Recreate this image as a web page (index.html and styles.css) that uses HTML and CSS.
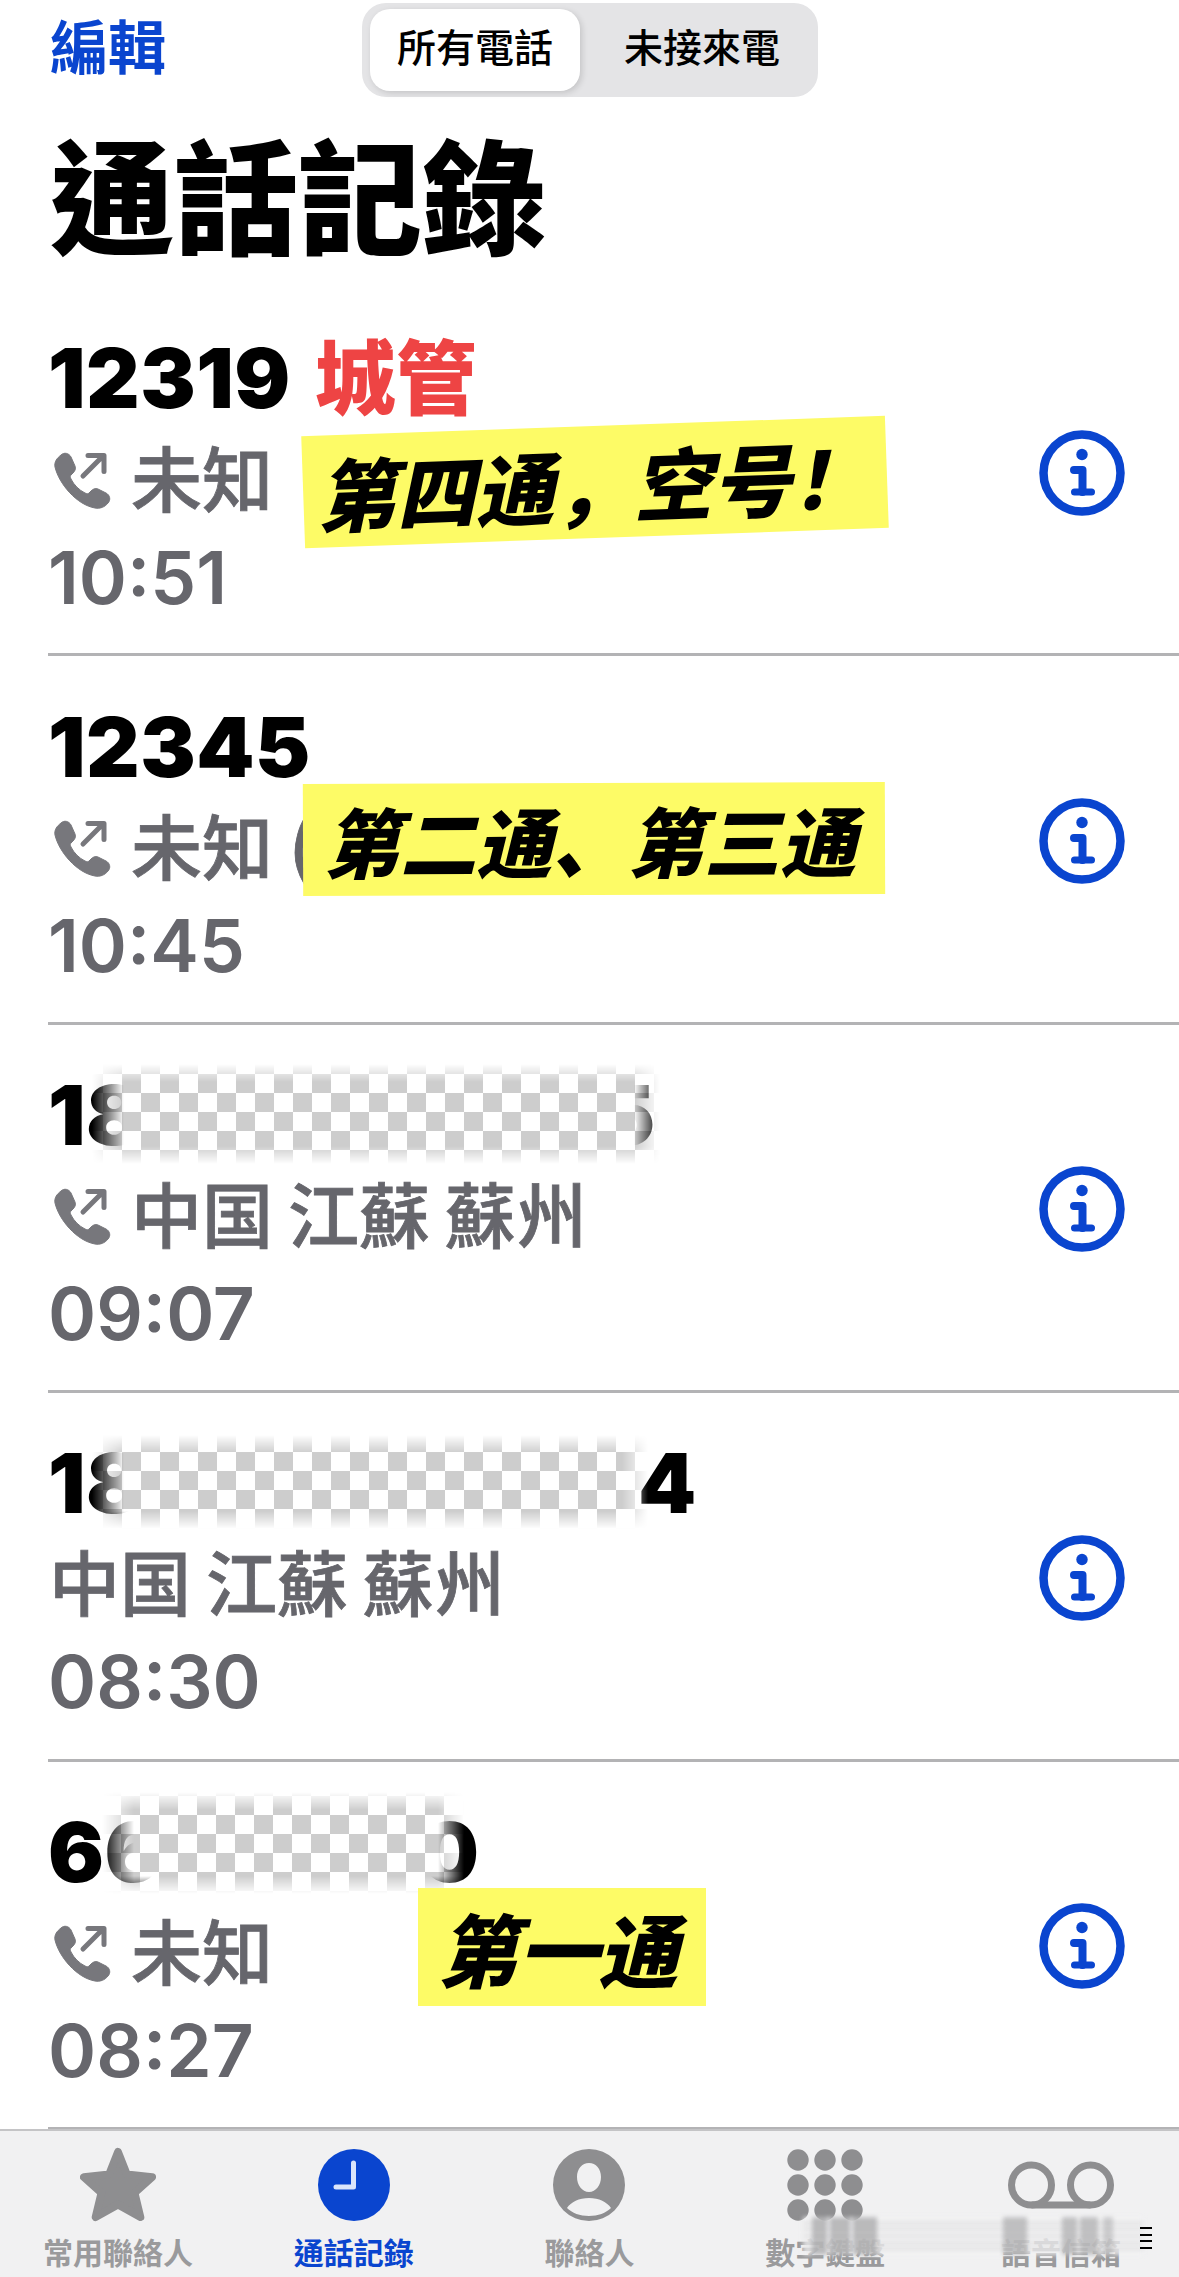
FILE: index.html
```html
<!DOCTYPE html>
<html lang="zh-Hant">
   <head>
      <meta charset="UTF-8">
      <title>通話記錄</title>
      <link rel="stylesheet" href="styles.css">
   </head>
   <body>
      <svg class="defs" width="0" height="0">
         <symbol id="call-out" viewBox="0 0 60 60">
            <path d="M9 5c3-3 8-2 10 2l4 9c1 3 0 5-2 7l-2 2c-1 1-1 2 0 4 3 6 8 11 14 14 2 1 3 1 4 0l2-2c2-2 4-3 7-2l8 4c4 2 5 7 2 10-3 4-8 6-13 5C25 55 7 34 3 17 2 12 5 8 9 5z"/>
            <path d="M31 26L50 7M36 5.500h16v16" fill="none" stroke-width="5" stroke-linecap="round" stroke-linejoin="round"/>
         </symbol>
         <symbol id="info" viewBox="0 0 86 86">
            <circle cx="43" cy="43" r="38.500" fill="none" stroke="#0a45cf" stroke-width="8.500"/>
            <circle cx="43" cy="24.500" r="5.700" fill="#0a45cf"/>
            <path d="M35 40h8.500v22" fill="none" stroke="#0a45cf" stroke-width="8" stroke-linecap="round" stroke-linejoin="round"/>
            <path d="M35.500 62h17" fill="none" stroke="#0a45cf" stroke-width="7" stroke-linecap="round"/>
         </symbol>
      </svg>

      <div class="screen">
         <header class="top">
            <a class="edit">編輯</a>
            <div class="segment">
               <span class="seg-item seg-on">所有電話</span>
               <span class="seg-item">未接來電</span>
            </div>
         </header>
         <h1 class="title">通話記錄</h1>

         <ul class="calls">
            <li class="call">
               <div class="call-text">
                  <div class="name">12319<span class="tag">城管</span></div>
                  <div class="sub"><svg class="out"><use href="#call-out"/></svg>未知</div>
                  <div class="time">10:51</div>
               </div>
               <svg class="info"><use href="#info"/></svg>
               <div class="note note-a" lang="zh-CN"><span>第四通&#xFF0C;空号&#xFF01;</span></div>
            </li>
            <li class="call">
               <div class="call-text">
                  <div class="name">12345</div>
                  <div class="sub"><svg class="out"><use href="#call-out"/></svg>未知 (</div>
                  <div class="time">10:45</div>
               </div>
               <svg class="info"><use href="#info"/></svg>
               <div class="note note-b" lang="zh-CN"><span>第二通、第三通</span></div>
            </li>
            <li class="call">
               <div class="call-text">
                  <div class="name">18<span class="tail tail-c">5</span></div>
                  <div class="sub"><svg class="out"><use href="#call-out"/></svg>中国 江蘇 蘇州</div>
                  <div class="time">09:07</div>
               </div>
               <svg class="info"><use href="#info"/></svg>
               <div class="mosaic mosaic-c"></div>
            </li>
            <li class="call">
               <div class="call-text">
                  <div class="name">18<span class="tail tail-d">4</span></div>
                  <div class="sub">中国 江蘇 蘇州</div>
                  <div class="time">08:30</div>
               </div>
               <svg class="info"><use href="#info"/></svg>
               <div class="mosaic mosaic-d"></div>
            </li>
            <li class="call">
               <div class="call-text">
                  <div class="name">66<span class="tail tail-e">0</span></div>
                  <div class="sub"><svg class="out"><use href="#call-out"/></svg>未知</div>
                  <div class="time">08:27</div>
               </div>
               <svg class="info"><use href="#info"/></svg>
               <div class="mosaic mosaic-e"></div>
               <div class="note note-c" lang="zh-CN"><span>第一通</span></div>
            </li>
         </ul>

         <nav class="tabs">
            <div class="tab">
               <svg class="tab-icon" viewBox="0 0 78 76"><polygon class="star" points="39,4 48,27 74,30 56,46 62,71 39,58 16,71 22,46 4,30 30,27"/></svg>
               <span>常用聯絡人</span>
            </div>
            <div class="tab tab-on">
               <svg class="tab-icon" viewBox="-2 -2 76 76"><circle cx="36" cy="36" r="36"/><path d="M35.500 14v24H18" fill="none" stroke="#dbe5fb" stroke-width="5" stroke-linecap="round" stroke-linejoin="round"/></svg>
               <span>通話記錄</span>
            </div>
            <div class="tab">
               <svg class="tab-icon" viewBox="-2 -2 76 76"><path fill-rule="evenodd" d="M36 0a36 36 0 1 1 0 72a36 36 0 0 1 0-72zM36 14c-7 0-12 6-12 14s5 15 12 15 12-7 12-15-5-14-12-14zM36 49c-10 0-18 4-22 10 5 5 13 8 22 8s17-3 22-8c-4-6-12-10-22-10z"/></svg>
               <span>聯絡人</span>
            </div>
            <div class="tab">
               <svg class="tab-icon" viewBox="0 0 76 76">
                  <circle cx="11" cy="13" r="10.700"/><circle cx="38" cy="13" r="10.700"/><circle cx="65" cy="13" r="10.700"/>
                  <circle cx="11" cy="38" r="10.700"/><circle cx="38" cy="38" r="10.700"/><circle cx="65" cy="38" r="10.700"/>
                  <circle cx="11" cy="63" r="10.700"/><circle cx="38" cy="63" r="10.700"/><circle cx="65" cy="63" r="10.700"/>
               </svg>
               <span>數字鍵盤</span>
            </div>
            <div class="tab">
               <svg class="tab-icon tab-icon-wide" viewBox="0 0 106 76">
                  <g class="tape"><circle cx="23.500" cy="38" r="20"/><circle cx="82.500" cy="38" r="20"/><path d="M23.500 58h59"/></g>
               </svg>
               <span>語音信箱</span>
            </div>
            <div class="smear"></div>
            <div class="ticks"></div>
         </nav>
      </div>
   </body>
</html>
```

FILE: styles.css
```css
* {
    box-sizing: border-box;
}
html,
body {
    margin: 0;
    padding: 0;
    background: #fff;
}
.defs {
    position: absolute;
}
.screen {
    width: 1179px;
    height: 2277px;
    overflow: hidden;
    position: relative;
    font-family: "Inter", "Noto Sans CJK TC", sans-serif;
    color: #000;
}

/* Top bar */
.top {
    height: 97px;
    padding: 3px 0 0 50px;
    display: flex;
    align-items: flex-start;
}
.edit {
    width: 312px;
    padding-top: 5px;
    font-size: 58px;
    line-height: 80px;
    font-weight: 700;
    color: #0a45cf;
}
.segment {
    width: 456px;
    height: 94px;
    padding: 6px 8px;
    display: flex;
    background: #e4e4e6;
    border-radius: 24px;
}
.seg-item {
    width: 220px;
    font-size: 39px;
    line-height: 78px;
    font-weight: 500;
    text-align: center;
    margin-left: 14px;
}
.seg-on {
    width: 214px;
    margin-left: 0;
    background: #fff;
    border-radius: 20px;
    box-shadow: 2px 2px 6px rgba(0, 0, 0, 0.14);
}

.title {
    margin: 33px 0 0 50px;
    height: 158px;
    font-size: 124px;
    line-height: 140px;
    font-weight: 900;
}

/* Call rows */
.calls {
    list-style: none;
    margin: 0;
    padding: 0 0 0 48px;
}
.call {
    position: relative;
    height: 368.4px;
    padding: 0 54px 0 2px;
    display: flex;
    align-items: center;
    justify-content: space-between;
    border-bottom: 3px solid #b3b3b5;
}
.call-text {
    margin-top: 10px;
}
.name {
    position: relative;
    margin-left: -2px;
    font-size: 83px;
    line-height: 102px;
    font-weight: 900;
    letter-spacing: 0.5px;
}
.tag {
    margin-left: 24px;
    color: #ee4444;
    font-size: 81px;
    font-weight: 900;
    letter-spacing: 0;
}
.sub {
    display: flex;
    align-items: center;
    margin-left: -1px;
    font-size: 71px;
    line-height: 100px;
    font-weight: 500;
    word-spacing: -4px;
    color: #66666c;
    -webkit-text-stroke: 0.8px #66666c;
}
.out {
    width: 60px;
    height: 60px;
    margin: 0 19px 0 3px;
    fill: #77777c;
    stroke: #77777c;
}
.time {
    margin-left: -2px;
    font-size: 73px;
    line-height: 95px;
    font-weight: 600;
    color: #66666c;
}
.info {
    width: 86px;
    height: 86px;
    margin-top: 4px;
}
.tail {
    position: absolute;
    top: 11px;
    line-height: 80px;
}
.tail-c {
    left: 552px;
}
.tail-d {
    left: 590px;
}
.tail-e {
    left: 372px;
}

/* Stickers added on top of the screenshot */
.note {
    position: absolute;
    background: #fdfb66;
    display: flex;
    align-items: center;
    justify-content: center;
    font-family: "Noto Sans CJK SC", sans-serif;
    font-size: 74px;
    line-height: 1;
    font-style: italic;
    font-weight: 900;
    white-space: nowrap;
}
.note-a {
    left: 255px;
    top: 138px;
    width: 584px;
    height: 112px;
    font-size: 79px;
    padding-right: 4px;
    transform: rotate(-2deg);
}
.note-b {
    left: 255px;
    top: 127px;
    width: 582px;
    height: 112px;
    padding-right: 8px;
    transform: rotate(-0.2deg);
    font-size: 76px;
}
.note-c {
    left: 370px;
    top: 126px;
    width: 288px;
    height: 118px;
    padding-right: 8px;
    font-size: 80px;
}

/* Checkered redaction */
.mosaic {
    position: absolute;
    background-color: #fff;
    background-image: conic-gradient(#cdcdcd 25%, #fff 0 50%, #cdcdcd 0 75%, #fff 0);
    background-size: 38px 38px;
    -webkit-mask-image: linear-gradient(90deg, transparent, #000 32px, #000 calc(100% - 26px), transparent),
        linear-gradient(180deg, transparent, #000 18px, #000 calc(100% - 18px), transparent);
    -webkit-mask-composite: source-in;
    mask-composite: intersect;
}
.mosaic-c {
    left: 44px;
    top: 39px;
    width: 568px;
    height: 100px;
    background-position: 11px 10px;
}
.mosaic-d {
    left: 44px;
    top: 42px;
    width: 556px;
    height: 94px;
    background-position: 11px 17px;
}
.mosaic-e {
    left: 54px;
    top: 30px;
    width: 362px;
    height: 102px;
    background-position: 19px 23px;
}

/* Tab bar */
.tabs {
    position: absolute;
    left: 0;
    right: 0;
    bottom: 0;
    height: 148px;
    display: flex;
    justify-content: space-around;
    background: #f1f1f2;
    border-top: 2px solid #c4c4c6;
}
.tab {
    width: 236px;
    display: flex;
    flex-direction: column;
    align-items: center;
    padding-top: 16px;
    font-size: 30px;
    line-height: 36px;
    font-weight: 700;
    color: #9a9a9c;
}
.tab-icon {
    flex-shrink: 0;
    width: 76px;
    height: 76px;
    margin-bottom: 12px;
    fill: #8e8e90;
}
.tab-icon-wide {
    width: 106px;
}
.star {
    stroke: #8e8e90;
    stroke-width: 8;
    stroke-linejoin: round;
}
.tape {
    fill: none;
    stroke: #8e8e90;
    stroke-width: 7;
}
.tab-on {
    color: #0a45cf;
}
.tab-on .tab-icon {
    fill: #0a45cf;
}

/* Stray blur and marks at the bottom right of the capture */
.smear {
    position: absolute;
    left: 803px;
    top: 86px;
    width: 340px;
    height: 38px;
    background-color: rgba(243, 243, 244, 0.8);
    background-image:
        repeating-linear-gradient(180deg, transparent 0 4.7px, rgba(130, 130, 132, 0.25) 4.7px 6.700px),
        linear-gradient(90deg,
            transparent 9px, rgba(140, 140, 142, 0.5) 9px 24px, transparent 24px 27px,
            rgba(140, 140, 142, 0.5) 27px 47px, transparent 47px 50px,
            rgba(140, 140, 142, 0.5) 50px 74px, transparent 74px 200px,
            rgba(140, 140, 142, 0.45) 200px 224px, transparent 224px 259px,
            rgba(140, 140, 142, 0.45) 259px 274px, transparent 274px 277px,
            rgba(140, 140, 142, 0.45) 277px 295px, transparent 295px 300px,
            rgba(140, 140, 142, 0.35) 300px 310px, transparent 310px);
    filter: blur(2px);
}
.ticks {
    position: absolute;
    left: 1140px;
    top: 96px;
    width: 12px;
    height: 24px;
    background: repeating-linear-gradient(180deg, #000 0 2px, transparent 2px 6.700px);
}
```
